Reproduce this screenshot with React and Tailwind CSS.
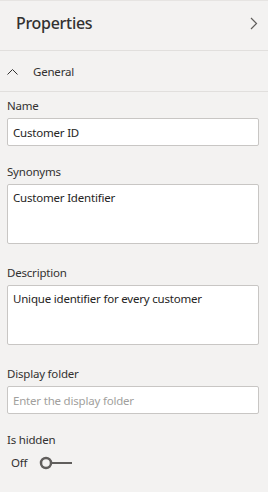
import { useState } from "react";

function Field({ label, className = "", children }) {
    return (
        <div className={className}>
            <div className="text-[11.5px] leading-[16px] tracking-[-0.2px] text-[#323130]">{label}</div>
            <div className="mt-[4px]">{children}</div>
        </div>
    );
}

export default function App() {
    const [name, setName] = useState("Customer ID");
    const [synonyms, setSynonyms] = useState("Customer Identifier");
    const [description, setDescription] = useState("Unique identifier for every customer");
    const [folder, setFolder] = useState("");
    const [hidden, setHidden] = useState(false);

    const boxClass =
        "block w-[252px] bg-white border border-[#c8c6c4] rounded-[2px] px-[5px] text-[11.5px] leading-[16px] tracking-[-0.2px] text-[#252423] outline-none placeholder:text-[#a19f9d]";

    return (
        <div className="w-[268px] h-[492px] bg-[#f3f2f1] border-t border-[#e6e4e2] font-['Noto_Sans',sans-serif] overflow-hidden">

            {/* Header */}
            <div className="h-[50px] flex items-start justify-between pl-[16px] pr-[9px] pt-[10px] border-b border-[#e1dfdd]">
                <span className="text-[16px] leading-[24px] font-medium tracking-[-0.3px] text-[#323130]">Properties</span>
                <svg width="10" height="14" viewBox="0 0 10 14" className="mt-[6px]">
                    <path d="M2 1 L7.5 6.5 L2 12" fill="none" stroke="#605e5c" strokeWidth="1.2" />
                </svg>
            </div>

            {/* Section toggle */}
            <div className="h-[41px] flex items-center border-b border-[#e1dfdd] pl-[7px]">
                <svg width="11" height="8" viewBox="0 0 11 8" className="mt-[1px]">
                    <path d="M0.5 6.5 L5.5 1.5 L10.5 6.5" fill="none" stroke="#323130" strokeWidth="1" />
                </svg>
                <span className="ml-[15px] mt-[2px] text-[11.5px] leading-[16px] tracking-[-0.2px] text-[#323130]">General</span>
            </div>

            {/* Fields */}
            <div className="pl-[7px] pt-[6px]">
                <Field label="Name">
                    <input
                        className={`${boxClass} h-[28px]`}
                        value={name}
                        onChange={(e) => setName(e.target.value)}
                    />
                </Field>

                <Field label="Synonyms" className="mt-[18px]">
                    <textarea
                        className={`${boxClass} h-[60px] pt-[5px] resize-none`}
                        value={synonyms}
                        onChange={(e) => setSynonyms(e.target.value)}
                    />
                </Field>

                <Field label="Description" className="mt-[21px]">
                    <textarea
                        className={`${boxClass} h-[60px] pt-[5px] resize-none`}
                        value={description}
                        onChange={(e) => setDescription(e.target.value)}
                    />
                </Field>

                <Field label="Display folder" className="mt-[21px]">
                    <input
                        className={`${boxClass} h-[28px]`}
                        placeholder="Enter the display folder"
                        value={folder}
                        onChange={(e) => setFolder(e.target.value)}
                    />
                </Field>

                <div className="mt-[18px]">
                    <div className="text-[11.5px] leading-[16px] tracking-[-0.2px] text-[#323130]">Is hidden</div>
                    <button
                        onClick={() => setHidden(!hidden)}
                        className="mt-[7px] flex items-center pl-[4px]"
                    >
                        <span className="text-[11.5px] leading-[16px] tracking-[-0.2px] text-[#323130]">{hidden ? "On" : "Off"}</span>
                        <svg width="36" height="16" viewBox="0 0 36 16" className="ml-[11px]">
                            <circle cx="8" cy="8" r="5" fill="none" stroke="#605e5c" strokeWidth="2.5" />
                            <path d="M13 8 H34" stroke="#605e5c" strokeWidth="2" />
                        </svg>
                    </button>
                </div>
            </div>
        </div>
    );
}
